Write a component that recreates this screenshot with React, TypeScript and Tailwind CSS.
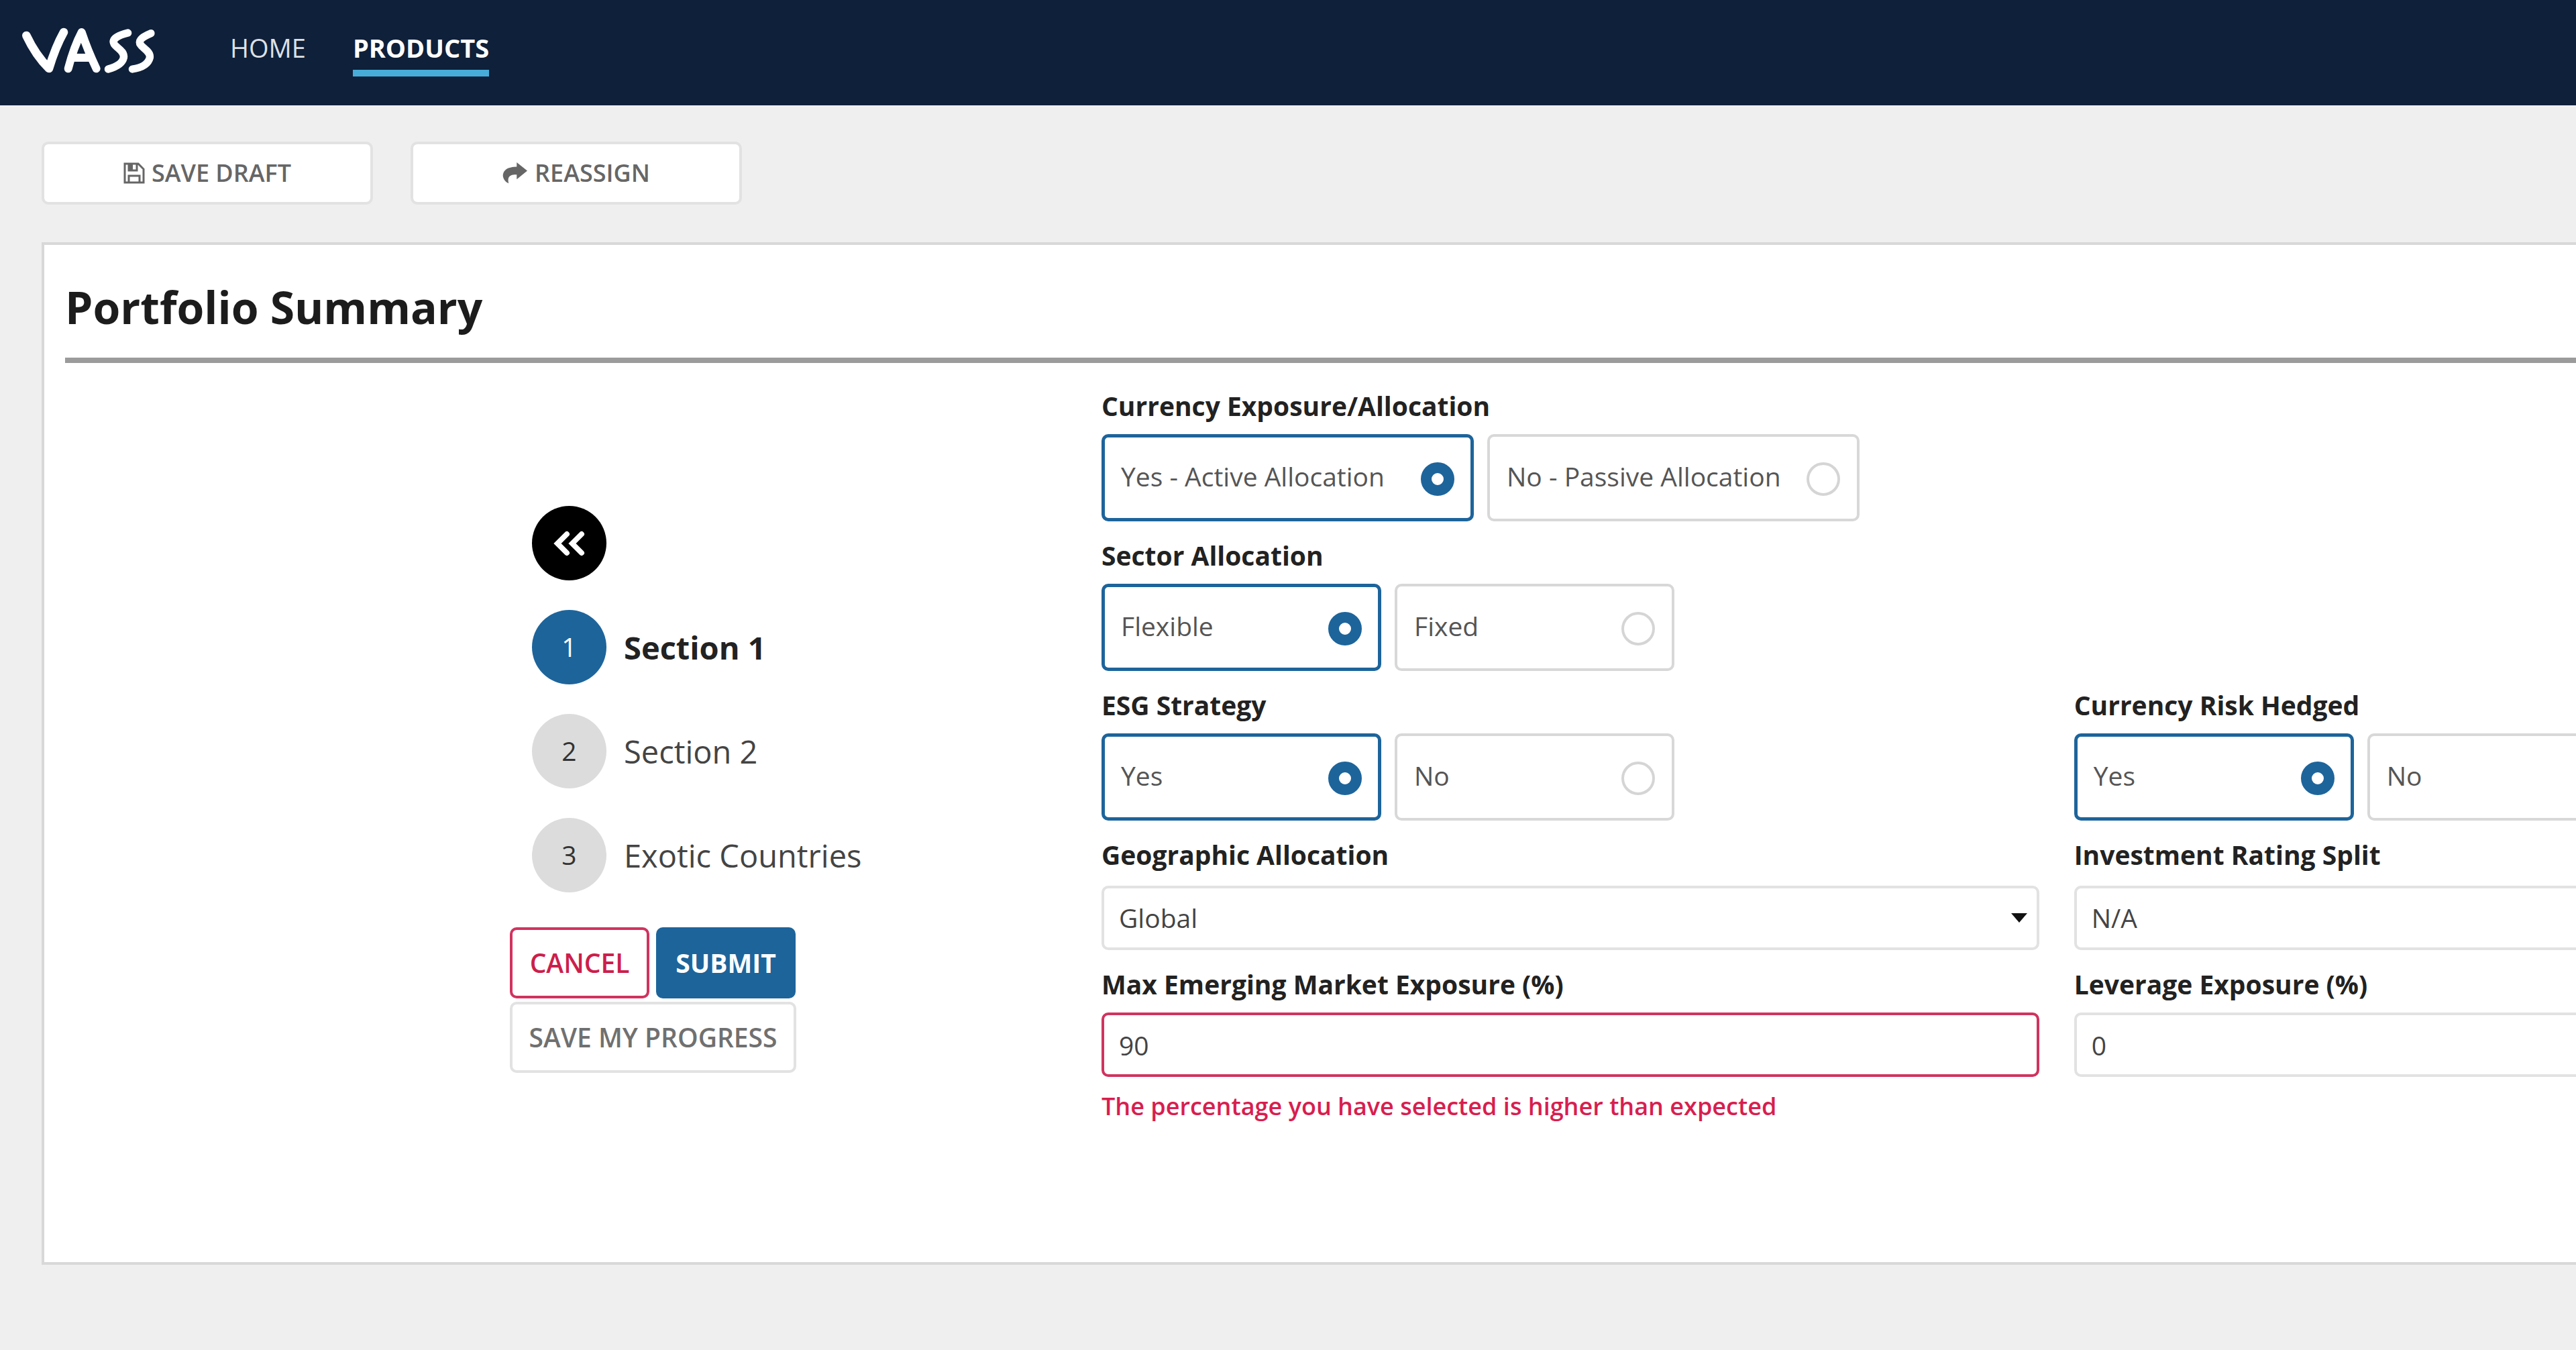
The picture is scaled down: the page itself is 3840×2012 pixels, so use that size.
import React, { useState } from 'react';
import clsx from 'clsx';

interface RadioCardsProps {
  name: string;
  label: string;
  options: string[];
  defaultValue: string;
  wide?: boolean;
}

interface FieldProps {
  id: string;
  label: string;
  defaultValue: string;
  error?: string;
}

const labelClass = 'block text-[39px] leading-[56px] font-bold text-[#222]';
const fieldClass =
  'block h-[96px] w-full appearance-none rounded-[10px] border-4 bg-white px-[22px] text-[39px] text-[#444] outline-none';

const Logo: React.FC = () => (
  <svg
    viewBox="0 0 720 330"
    className="h-[110px] w-[240px]"
    fill="none"
    stroke="white"
    strokeLinecap="round"
    strokeLinejoin="round"
    role="img"
    aria-label="VASS"
  >
    <path strokeWidth="38" d="M58 99 Q100 188 159 246 Q188 150 225 84" />
    <path strokeWidth="36" d="M245 247 Q270 150 305 84 Q332 165 371 247 M275 198 H340" />
    <path strokeWidth="34" d="M512 87 C475 96 438 112 450 136 C462 156 498 168 493 198 C486 228 450 242 424 249" />
    <path strokeWidth="34" d="M615 89 C596 98 558 112 566 136 C576 156 614 168 610 198 C602 230 565 244 532 249" />
  </svg>
);

const SaveIcon: React.FC = () => (
  <svg viewBox="0 0 32 32" className="size-8" fill="none" stroke="currentColor" strokeWidth="3" aria-hidden="true">
    <path d="M2 2 H22 L30 10 V30 H2 Z M8 2 V12 H20 V2 M8 30 V20 H24 V30" />
    <path d="M8 2 H14 V12 H8 Z" fill="currentColor" stroke="none" />
  </svg>
);

const ShareIcon: React.FC = () => (
  <svg viewBox="30 32 116 104" className="h-[34px] w-[38px]" fill="currentColor" aria-hidden="true">
    <path d="M95 35 L143 73 L95 112 V91 C68 90 50 96 58 131 C42 124 32 108 32 94 C34 66 60 55 95 55 Z" />
  </svg>
);

const RadioCards: React.FC<RadioCardsProps> = ({ name, label, options, defaultValue, wide }) => {
  const [value, setValue] = useState(defaultValue);

  return (
    <fieldset className="pb-[23px]">
      <legend className={labelClass}>{label}</legend>
      <div className="mt-[14px] flex gap-[20px]">
        {options.map((option) => (
          <label
            key={option}
            className={clsx(
              'flex h-[130px] shrink-0 items-center justify-between rounded-[10px] pb-1 text-[39px] leading-[56px] text-[#555]',
              wide ? 'w-[555px]' : 'w-[417px]',
              value === option ? 'border-[5px] border-[#1d649b] px-[24px]' : 'border-4 border-[#d8d8d8] px-[25px]'
            )}
          >
            {option}
            <input
              type="radio"
              name={name}
              checked={value === option}
              onChange={() => setValue(option)}
              className="mt-2 size-[50px] appearance-none rounded-full border-4 border-[#d5d5d5] bg-white checked:border-[16px] checked:border-[#1d649b]"
            />
          </label>
        ))}
      </div>
    </fieldset>
  );
};

const SelectField: React.FC<FieldProps> = ({ id, label, defaultValue }) => (
  <div className="pb-[23px]">
    <label htmlFor={id} className={labelClass}>
      {label}
    </label>
    <div className="relative mt-[18px]">
      <select id={id} defaultValue={defaultValue} className={clsx(fieldClass, 'border-[#e2e2e2]')}>
        <option>{defaultValue}</option>
      </select>
      <svg
        viewBox="0 0 24 14"
        className="pointer-events-none absolute top-[41px] right-[18px] h-[14px] w-6 fill-[#111]"
        aria-hidden="true"
      >
        <path d="M0 0 H24 L12 14 Z" />
      </svg>
    </div>
  </div>
);

const TextField: React.FC<FieldProps> = ({ id, label, defaultValue, error }) => (
  <div>
    <label htmlFor={id} className={labelClass}>
      {label}
    </label>
    <input
      id={id}
      type="text"
      defaultValue={defaultValue}
      aria-invalid={!!error}
      className={clsx(fieldClass, 'mt-[14px]', error ? 'border-[#d0335f]' : 'border-[#e2e2e2]')}
    />
    {error && <p className="mt-[18px] text-[36px] leading-[52px] font-semibold text-[#d81e4f]">{error}</p>}
  </div>
);

const steps = ['Section 1', 'Section 2', 'Exotic Countries'];

const App: React.FC = () => {
  const [active, setActive] = useState(0);

  return (
    <div className="min-h-screen overflow-hidden bg-[#efefef] font-['Open_Sans',sans-serif]">
      <header className="flex h-[157px] items-start bg-[#0f203a] pl-5">
        <a href="#" className="mt-5">
          <Logo />
        </a>
        <nav className="ml-[83px] flex gap-[70px] pt-[43px] text-[38px] leading-[56px] text-white">
          <a href="#" className="text-[#dde1e6]">
            HOME
          </a>
          <a href="#" aria-current="page" className="border-b-[10px] border-[#47acd8] pb-[5px] font-bold">
            PRODUCTS
          </a>
        </nav>
      </header>

      <main className="pl-[62px]">
        <div className="flex gap-[56px] pt-[54px] text-[36px] font-semibold text-[#666]">
          <button
            type="button"
            className="flex h-[94px] w-[494px] items-center justify-center gap-[10px] rounded-[10px] border-4 border-[#e2e2e2] bg-white"
          >
            <SaveIcon />
            SAVE DRAFT
          </button>
          <button
            type="button"
            className="flex h-[94px] w-[494px] items-center justify-center gap-[10px] rounded-[10px] border-4 border-[#e2e2e2] bg-white"
          >
            <ShareIcon />
            REASSIGN
          </button>
        </div>

        <section className="mt-[56px] border-4 border-r-0 border-[#d8d8d8] bg-white pb-[206px] pl-[31px]">
          <h1 className="border-b-8 border-[#9b9b9b] pt-[48px] pb-[32px] text-[66px] leading-[88px] font-bold text-[#1c1c1c]">
            Portfolio Summary
          </h1>

          <div className="flex">
            <aside className="w-[1545px] shrink-0 pt-[213px] pl-[663px]">
              <div className="flex flex-col items-start gap-[44px] pl-[33px]">
                <button
                  type="button"
                  aria-label="Collapse"
                  className="flex size-[111px] items-center justify-center rounded-full bg-black"
                >
                  <svg viewBox="0 0 50 38" className="h-[38px] w-[50px]" fill="none" stroke="white" strokeWidth="8" strokeLinecap="round" aria-hidden="true">
                    <path d="M21 5 L7 19 L21 33 M43 5 L29 19 L43 33" />
                  </svg>
                </button>
                {steps.map((step, index) => (
                  <button
                    key={step}
                    type="button"
                    onClick={() => setActive(index)}
                    className="flex items-center gap-[26px]"
                  >
                    <span
                      className={clsx(
                        'flex size-[111px] items-center justify-center rounded-full text-[39px]',
                        index === active ? 'bg-[#1d649b] text-white' : 'bg-[#dcdcdc] text-[#333]'
                      )}
                    >
                      {index + 1}
                    </span>
                    <span
                      className={clsx(
                        'text-[47px] leading-[64px]',
                        index === active ? 'font-bold text-[#222]' : 'text-[#444]'
                      )}
                    >
                      {step}
                    </span>
                  </button>
                ))}
              </div>

              <div className="mt-[52px] flex w-[427px] flex-wrap gap-x-[10px] gap-y-[5px] text-[39px]">
                <button
                  type="button"
                  className="h-[106px] w-[208px] rounded-[10px] border-4 border-[#d0335f] font-semibold text-[#cc1f4b]"
                >
                  CANCEL
                </button>
                <button type="button" className="h-[106px] w-[208px] rounded-[10px] bg-[#1d649b] font-bold text-white">
                  SUBMIT
                </button>
                <button
                  type="button"
                  className="h-[106px] w-full rounded-[10px] border-4 border-[#e2e2e2] font-semibold text-[#707070]"
                >
                  SAVE MY PROGRESS
                </button>
              </div>
            </aside>

            {/* the second column runs past the right edge of the window */}
            <form className="min-w-0 flex-1 pt-[36px]">
              <div className="grid w-[130%] grid-cols-2 gap-x-[52px] pr-[10px]">
                <div className="col-span-2">
                  <RadioCards
                    name="currencyExposure"
                    label="Currency Exposure/Allocation"
                    options={['Yes - Active Allocation', 'No - Passive Allocation']}
                    defaultValue="Yes - Active Allocation"
                    wide
                  />
                </div>
                <div className="col-span-2">
                  <RadioCards
                    name="sectorAllocation"
                    label="Sector Allocation"
                    options={['Flexible', 'Fixed']}
                    defaultValue="Flexible"
                  />
                </div>
                <RadioCards name="esgStrategy" label="ESG Strategy" options={['Yes', 'No']} defaultValue="Yes" />
                <RadioCards name="currencyRisk" label="Currency Risk Hedged" options={['Yes', 'No']} defaultValue="Yes" />
                <SelectField id="geographic" label="Geographic Allocation" defaultValue="Global" />
                <SelectField id="rating" label="Investment Rating Split" defaultValue="N/A" />
                <TextField
                  id="emerging"
                  label="Max Emerging Market Exposure (%)"
                  defaultValue="90"
                  error="The percentage you have selected is higher than expected"
                />
                <TextField id="leverage" label="Leverage Exposure (%)" defaultValue="0" />
              </div>
            </form>
          </div>
        </section>
      </main>
    </div>
  );
};

export default App;
